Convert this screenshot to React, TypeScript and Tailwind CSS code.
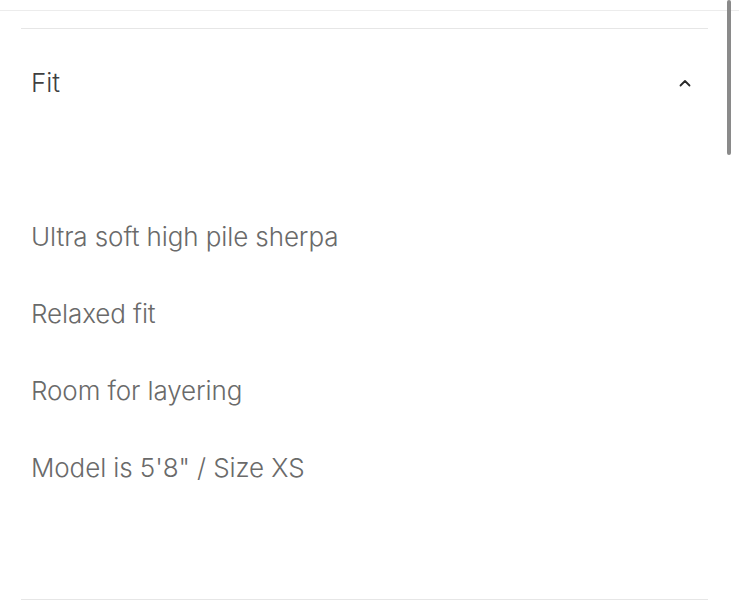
import React from "react";

const details = [
  "Ultra soft high pile sherpa",
  "Relaxed fit",
  "Room for layering",
  "Model is 5'8\" / Size XS",
];

export default function App() {
  return (
    <div className="relative h-[609px] w-[739px] overflow-hidden bg-white font-['Inter',sans-serif] font-light">
      <div className="pt-[10px]">
        <div className="h-px bg-[#ececec]" />
      </div>
      <div className="mx-[21px] mt-[17px] w-[687px] border-y border-[#e6e6e6]">
        {/* accordion header */}
        <div className="flex h-[107px] items-center justify-between pl-[10px] pr-[17px]">
          <span className="text-[26px] text-[#3f3f3f]">Fit</span>
          <svg
            xmlns="http://www.w3.org/2000/svg"
            viewBox="0 0 12 8"
            fill="none"
            stroke="currentColor"
            strokeWidth="1.8"
            strokeLinecap="round"
            strokeLinejoin="round"
            className="h-[8px] w-[12px] text-[#2a2a2a]"
          >
            <path d="M1.5 6.5L6 2l4.5 4.5" />
          </svg>
        </div>
        {/* accordion body */}
        <ul className="list-none pt-[62px] pb-[93px] pl-[10px]">
          {details.map((d) => (
            <li key={d} className="flex h-[77px] items-center text-[26px] tracking-[-0.1px] text-[#6a6a6a]">
              {d}
            </li>
          ))}
        </ul>
      </div>
      {/* scrollbar */}
      <div className="absolute top-0 right-[8px] h-[155px] w-[4px] rounded-full bg-[#8a8a8a]" />
    </div>
  );
}
